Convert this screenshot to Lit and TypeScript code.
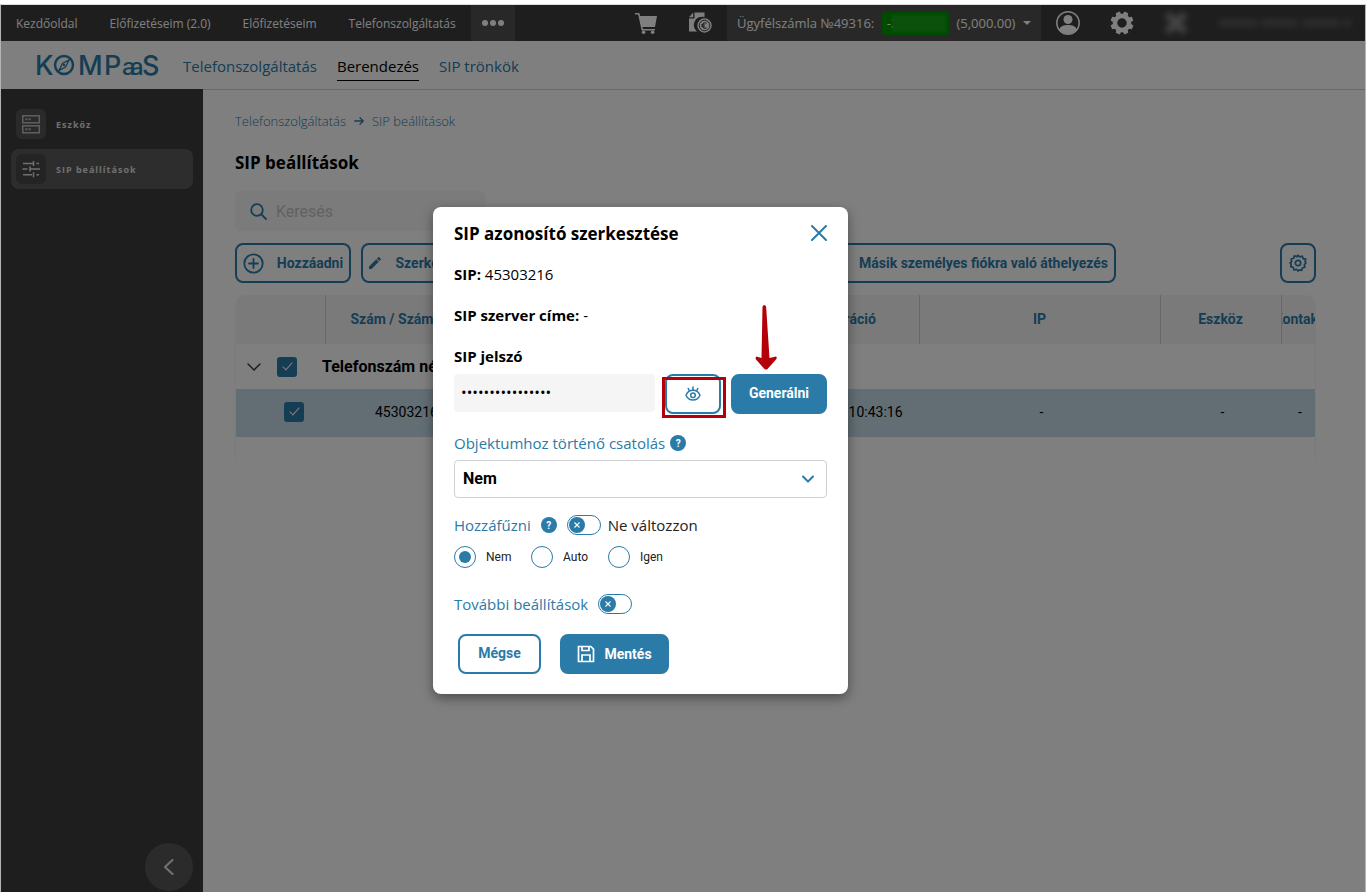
import { LitElement, html, css, svg } from "lit";
import { customElement, state } from "lit/decorators.js";
import { classMap } from "lit/directives/class-map.js";

const stroke = (size: number, body: unknown, width = 2, box = 24) => html`
  <svg width=${size} height=${size} viewBox="0 0 ${box} ${box}" fill="none" stroke="currentColor"
    stroke-width=${width} stroke-linecap="round" stroke-linejoin="round" aria-hidden="true">${body}</svg>`;

const solid = (size: number, body: unknown, box = 24) => html`
  <svg width=${size} height=${size} viewBox="0 0 ${box} ${box}" fill="currentColor" aria-hidden="true">${body}</svg>`;

const cart = solid(22, svg`<path d="M0 1h4.3l1 3H22l-2 11H7.5l.4 2H20v1.4H6.6L3.2 2.4H0z"/><circle cx="8.6" cy="20.2" r="1.8"/><circle cx="17.6" cy="20.2" r="1.8"/>`, 22);

const invoice = solid(24, svg`<path d="M6.500 1.500h10V6a8.300 8.300 0 0 0-7.500 14.500H1V7.500h5.500z"/><path d="M1 6.200 5.200 1.500v4.700z"/><circle cx="16.500" cy="14.500" r="7.200"/>
  <circle cx="16.500" cy="14.500" r="5.300" fill="none" stroke="#3c3c3c" stroke-width="1"/>
  <path d="M18.500 12.200a2.700 2.700 0 1 0 0 4.600M13.300 13.800h3.400M13.300 15.300h3.400" fill="none" stroke="#3c3c3c" stroke-width="1.100"/>`);

const user = html`<svg width="24" height="24" viewBox="0 0 24 24" fill="currentColor" aria-hidden="true">
  <circle cx="12" cy="12" r="11.200" fill="none" stroke="currentColor" stroke-width="1.500"/>
  <circle cx="12" cy="8.500" r="4.500"/><path d="M3 18.500c2-4 5.500-4.500 9-4.500s7 .5 9 4.500A11.200 11.200 0 0 1 3 18.500z"/></svg>`;

const gearTeeth = [0, 45, 90, 135, 180, 225, 270, 315];
const gear = html`<svg width="24" height="24" viewBox="0 0 24 24" aria-hidden="true">
  <circle cx="12" cy="12" r="7" fill="none" stroke="currentColor" stroke-width="4.500"/>
  ${gearTeeth.map((a) => svg`<path d="M9.300 3.500 10 .5h4l.7 3z" fill="currentColor" transform="rotate(${a + 22.5} 12 12)"/>`)}</svg>`;

const gearOutline = stroke(18, svg`<path d="M9 1.200 10.700 3l2.600-.9.700 2.500 2.700.6-.6 2.600L17 9l-1.700 1.700.6 2.500-2.500.7-.7 2.600-2.500-.6L9 17l-1.500-1.700-2.500.7-.7-2.600-2.600-.7.600-2.500L1 9l1.700-1.500-.6-2.500 2.600-.7.700-2.500 2.500.8z"/><circle cx="9" cy="9" r="2.700"/>`, 1.7, 18);

const server = html`<svg width="20" height="20" viewBox="0 0 20 20" fill="none" stroke="currentColor" stroke-width="1.500" aria-hidden="true">
  <rect x="1.800" y="1.800" width="16.500" height="7"/><rect x="1.800" y="11.800" width="16.500" height="7"/>
  <path d="M4.500 5.200h2M7.700 5.200h2M4.500 15.200h2M7.700 15.200h2" stroke-width="2"/></svg>`;

const sliders = html`<svg width="20" height="20" viewBox="0 0 20 20" fill="none" stroke="currentColor" stroke-width="1.500" aria-hidden="true">
  <path d="M2 4.500h11M15.500 4.500H18M12.500 2v5M1.500 10h5M9 10h10M9 7.500v5M2 15.800h9M15.500 15.800H18M12.500 13.300v5"/></svg>`;

const pencil = solid(16, svg`<path d="M2 11.500V14h2.500l7.300-7.300-2.500-2.500zM13.700 4.800a.7.7 0 0 0 0-1L12.200 2.300a.7.7 0 0 0-1 0L10 3.500 12.500 6z"/>`, 16);

const eye = html`<svg width="18" height="18" viewBox="0 0 18 18" fill="none" stroke="currentColor" stroke-width="1.500" aria-hidden="true">
  <path d="M2 10.200C3.400 7 6 5.300 9 5.300s5.600 1.700 7 4.900c-1.400 3-4 4.800-7 4.800s-5.600-1.800-7-4.800z"/>
  <circle cx="9" cy="10.200" r="2.300"/><path d="M9 5V1.500M5.300 5.800 4 3M12.700 5.800 14 3"/></svg>`;

const floppy = html`<svg width="18" height="18" viewBox="0 0 18 18" fill="none" stroke="currentColor" stroke-width="1.700" aria-hidden="true">
  <path d="M1.500 1.500h12.300l2.700 2.700v12.300h-15z"/><path d="M5 1.500v4h7v-4M5 16.500V10h8v6.500"/></svg>`;

@customElement("app-toggle")
export class AppToggle extends LitElement {
  static properties = { label: { type: String } };
  declare label: string;
  static styles = css`
    :host { display: block; height: 20px; }
    .toggle { position: relative; display: block; box-sizing: border-box; width: 34px; height: 20px;
      border: 1px solid #2a7ba8; border-radius: 10px; background: #fff; padding: 1px; }
    .input { position: absolute; inset: 0; margin: 0; opacity: 0; cursor: pointer; }
    .knob { display: block; color: #2a7ba8; transition: margin-left 0.2s; }
    .input:checked + .knob { margin-left: 14px; }
  `;
  render() {
    return html`<span class="toggle">
      <input class="input" type="checkbox" role="switch" aria-label=${this.label} />
      <svg class="knob" width="16" height="16" viewBox="0 0 16 16" aria-hidden="true">
        <circle cx="8" cy="8" r="8" fill="currentColor" />
        <path d="M5.500 5.500l5 5m0-5l-5 5" stroke="#fff" stroke-width="1.100" />
      </svg>
    </span>`;
  }
}

@customElement("app-root")
export class AppRoot extends LitElement {
  @state() private attach = "Nem";

  static styles = css`
    :host { display: block; font-family: "Open Sans", "Noto Sans", sans-serif; color: #000; }
    * { box-sizing: border-box; }
    svg { display: block; flex: none; }
    button, input, select { font-family: inherit; margin: 0; }
    button { cursor: pointer; }
    a { color: inherit; text-decoration: none; }

    .frame { min-height: 100vh; padding-top: 4px; background: #fff; display: flex; flex-direction: column; }
    .page { position: relative; flex: 1; display: flex; flex-direction: column; overflow: hidden;
      border: 1px solid #b4b4b4; border-top-color: #dcdcdc; border-bottom: 0; }

    .topbar { display: flex; height: 36px; background: #3c3c3c; color: #fff; font-size: 12px; white-space: nowrap; }
    .topnav { display: flex; gap: 2px; }
    .toplink { display: flex; align-items: center; padding: 0 15px; }
    .more { display: flex; align-items: center; justify-content: center; width: 44px; border: 0; padding: 0;
      background: #515151; color: #fff; }
    .tools { margin-left: auto; display: flex; align-items: center; }
    .tool { display: flex; align-items: center; justify-content: center; width: 54px; height: 36px; padding: 0;
      border: 0; background: none; color: #fff; }
    .account { display: flex; align-items: center; justify-content: space-between; height: 36px; width: 314px; padding: 0 10px;
      border: 0; background: #515151; color: #fff; font-size: 13px; }
    .badge { display: flex; align-items: center; height: 23px; width: 67px; padding-left: 5px; border-radius: 3px;
      background: #009600; color: #fff; }
    .redacted { flex: 1; height: 17px; margin: 0 3px 0 -6px; background: #17a017; filter: blur(1px); }
    .blurred { filter: blur(3px); opacity: 0.4; }
    .person { width: 162px; display: flex; justify-content: flex-end; padding-right: 12px; }
    .person .blurred { opacity: 0.3; }

    .subbar { display: flex; align-items: center; height: 49px; padding-left: 35px; border-bottom: 1px solid #dccfd4;
      background: #fff; color: #2a7ba8; }
    .logo { color: #2a7ba8; overflow: visible; }
    .subnav { display: flex; gap: 20px; margin-left: 21px; font-size: 15px; white-space: nowrap; }
    .sublink { line-height: 24px; padding-bottom: 2px; border-bottom: 1px solid transparent; margin-top: 4px; }
    .sublink.active { color: #000; border-color: #000; }

    .body { flex: 1; display: flex; }
    .side { display: flex; flex-direction: column; gap: 5px; width: 202px; flex: none; margin-top: -1px;
      padding: 15px 10px 1px; background: #3c3c3c; color: #fff; }
    .sideitem { display: flex; align-items: center; gap: 10px; height: 40px; padding: 0 5px; border-radius: 8px;
      font-size: 9px; font-weight: 700; letter-spacing: 1px; color: #e0e0e0; }
    .sideitem.active { background: #5a5a5a; }
    .sideicon { display: flex; align-items: center; justify-content: center; width: 30px; height: 30px;
      border-radius: 6px; background: #555; color: #c0c0c0; }
    .sideitem.active .sideicon { background: #484848; color: #e0e0e0; }
    .collapse { display: flex; align-items: center; justify-content: center; width: 48px; height: 48px; margin-top: auto;
      align-self: flex-end; padding: 0; border: 0; border-radius: 50%; background: #575757; color: #e0e0e0; }

    .main { flex: 1; min-width: 0; padding: 19px 49px 0 32px; }
    .crumbs { display: flex; align-items: center; gap: 8px; height: 24px; font-size: 13px; font-weight: 300; color: #2a7ba8; }
    .title { margin: 18px 0 16px; font-size: 17px; line-height: 24px; font-weight: 700; }
    .search { display: flex; align-items: center; gap: 9px; width: 250px; height: 40px; padding: 0 15px; border-radius: 5px;
      background: #f6f6f6; color: #2a7ba8; }
    .searchbox { flex: 1; min-width: 0; border: 0; padding: 0; background: none; outline: 0; font: 16px Roboto, sans-serif; }
    .searchbox::placeholder { color: #c4c4c4; opacity: 1; }

    .actions { display: flex; gap: 10px; margin: 12px 0; }
    .btn { display: flex; align-items: center; justify-content: center; height: 40px; padding: 0 6px; border: 2px solid #2a7ba8;
      border-radius: 8px; background: #fff; color: #2a7ba8; font: 700 14px Roboto, sans-serif; white-space: nowrap; }
    .add { width: 116px; gap: 13px; padding: 0; }
    .edit { width: 118px; gap: 12px; }
    .move { width: 627px; justify-content: flex-end; }
    .settings { width: 36px; padding: 0; margin-left: auto; }

    .tablewrap { height: 167px; border: 1px solid #f5f5f5; border-width: 0 1px; border-radius: 10px 10px 0 0; overflow: hidden; }
    .table { width: 100%; table-layout: fixed; border-collapse: collapse; font: 14px Roboto, sans-serif; }
    .table th, .table td { padding: 0; overflow: hidden; white-space: nowrap; }
    .table thead th { height: 49px; padding-bottom: 2px; background: #f5f5f5; color: #2a7ba8; font-weight: 700; border-left: 1px solid #cfcfcf; }
    .table thead th:first-child { border-left: 0; }
    .head { display: flex; justify-content: center; }
    .table thead th.start { text-align: left; padding-left: 25px; }
    .group { display: flex; align-items: center; height: 45px; padding-left: 11px; font-size: 16px; font-weight: 700; }
    .table .groupcell { text-align: left; }
    .arrow { color: #333; margin-right: 16px; }
    .group .check { margin-right: 25px; }
    .row { background: #c5dce8; }
    .table .row td { height: 48px; text-align: center; padding: 0 0 2px 4px; }
    .table .row td.start { text-align: left; padding-left: 50px; }
    .table .row td.pick { text-align: left; padding-left: 48px; }
    .check { appearance: none; display: block; width: 20px; height: 20px; border-radius: 3px; background: #2a7ba8; position: relative; }
    .check:checked::before { content: ""; position: absolute; left: 8px; top: 3px; width: 4px; height: 9px;
      border: solid #fff; border-width: 0 1px 1px 0; transform: rotate(42deg); }
    .c-pick { width: 89px; } .c-num { width: 160px; } .c-name { width: 269px; } .c-reg { width: 165px; }
    .c-dev { width: 121px; } .c-contact { width: 34px; }

    .overlay { position: absolute; inset: 0; display: flex; align-items: center; justify-content: center;
      padding: 4px 85px 0 0; background: rgba(0, 0, 0, 0.5); }
    .modal { width: 415px; padding: 14px 21px 20px; border-radius: 8px; background: #fff; box-shadow: 0 4px 12px rgba(0, 0, 0, 0.4); }
    .modalhead { display: flex; align-items: center; justify-content: space-between; height: 24px; }
    .modaltitle { margin: 0; font-size: 17px; font-weight: 700; }
    .close { padding: 0; border: 0; background: none; color: #2a7ba8; }
    .line { margin: 17px 0 0; font-size: 15px; line-height: 24px; }
    .line b, .line label { font-weight: 700; }
    .password { position: relative; display: flex; gap: 10px; margin-top: 6px; }
    .pwd { flex: 1; min-width: 0; height: 38px; padding: 0 7px 2px; border: 0; border-radius: 4px; background: #f5f5f5; outline: 0; font-size: 15px; }
    .reveal { width: 56px; }
    .filled { background: #2a7ba8; color: #fff; }
    .generate { width: 96px; padding-bottom: 2px; }
    .mark { position: absolute; left: 207px; top: -70px; pointer-events: none; }
    .field { display: flex; align-items: center; height: 24px; font-size: 15px; color: #2a7ba8; white-space: nowrap; }
    .attach { margin-top: 17px; gap: 5px; }
    .help { display: flex; align-items: center; justify-content: center; width: 16px; height: 16px; padding: 0; border: 0;
      border-radius: 50%; background: #2a7ba8; color: #fff; font: 700 10px Roboto, sans-serif; }
    .selectwrap { position: relative; margin-top: 5px; color: #2a7ba8; }
    .select { appearance: none; width: 100%; height: 38px; padding: 0 8px 2px; border: 1px solid #d0d0d0; border-radius: 4px;
      background: #fff; color: #000; font: 700 16px Roboto, sans-serif; display: block; }
    .caret { position: absolute; right: 12px; top: 12px; pointer-events: none; }
    .pin { margin-top: 15px; gap: 10px; }
    .state { color: #222; margin-left: -3px; }
    .radios { display: flex; height: 22px; margin: 9px 0 0; padding: 0; border: 0; font: 12px Roboto, sans-serif; color: #222; }
    .radio { display: flex; align-items: center; gap: 10px; width: 77px; }
    .dot { appearance: none; width: 22px; height: 22px; border: 1px solid #2a7ba8; border-radius: 50%; padding: 4px; background: #fff; }
    .dot:checked { background: #2a7ba8 content-box; }
    .extra { margin-top: 24px; gap: 10px; }
    .foot { display: flex; gap: 19px; margin: 18px 0 0 4px; }
    .cancel { width: 83px; padding-bottom: 2px; }
    .save { width: 109px; gap: 9px; }
  `;

  private logo() {
    return html`<svg class="logo" width="126" height="40" viewBox="0 0 126 40" role="img" aria-label="KOMPaaS">
      <g font-family="Inter, sans-serif" font-size="27" font-weight="500" fill="currentColor">
        <text x="-1" y="30">K</text><text x="42" y="30">M</text><text x="68" y="30">P</text>
        <text x="86" y="30" font-size="24">a</text><text x="94" y="30" font-size="24">a</text><text x="106" y="30">S</text>
      </g>
      <circle cx="28" cy="20" r="9" fill="none" stroke="currentColor" stroke-width="2.500" />
      <path d="M33 15l-3.500 7-6.500 3.500 3.500-7z" fill="none" stroke="currentColor" stroke-width="1.400" />
      <circle cx="28" cy="20" r="1.200" fill="currentColor" />
    </svg>`;
  }

  render() {
    const top = ["Kezdőoldal", "Előfizetéseim (2.0)", "Előfizetéseim", "Telefonszolgáltatás"];
    const sub = ["Telefonszolgáltatás", "Berendezés", "SIP trönkök"];
    return html`<div class="frame"><div class="page">
      <header class="topbar">
        <nav class="topnav">${top.map((t) => html`<a class="toplink" href="#">${t}</a>`)}</nav>
        <button class="more" aria-label="Továbbiak">${solid(24, svg`<circle cx="4" cy="12" r="3"/><circle cx="12" cy="12" r="3"/><circle cx="20" cy="12" r="3"/>`)}</button>
        <div class="tools">
          <button class="tool" aria-label="Kosár">${cart}</button>
          <button class="tool" aria-label="Számlák">${invoice}</button>
          <button class="account"><span>Ügyfélszámla №49316:</span>
            <span class="badge">-2<span class="redacted"></span></span>
            <span>(5,000.00)</span>
            <svg width="8" height="4" viewBox="0 0 8 4"><path d="M0 0h8L4 4z" fill="currentColor" /></svg></button>
          <button class="tool" aria-label="Profil">${user}</button>
          <button class="tool" aria-label="Beállítások">${gear}</button>
          <button class="tool" aria-label="Eszközök"><svg class="blurred" width="26" height="26" viewBox="0 0 26 26"><path d="M4 4l18 18M22 4L4 22" stroke="#fff" stroke-width="7" /></svg></button>
          <div class="person"><svg class="blurred" width="136" height="16" viewBox="0 0 136 16"><path d="M2 8h132" stroke="#aaa" stroke-width="7" stroke-dasharray="38 4 36 5" /></svg></div>
        </div>
      </header>
      <div class="subbar">${this.logo()}
        <nav class="subnav">${sub.map((t, i) => html`<a href="#" class=${classMap({ sublink: true, active: i === 1 })}>${t}</a>`)}</nav>
      </div>
      <div class="body">
        <nav class="side">
          <a class="sideitem" href="#"><span class="sideicon">${server}</span>Eszköz</a>
          <a class="sideitem active" href="#"><span class="sideicon">${sliders}</span>SIP beállítások</a>
          <button class="collapse" aria-label="Összecsukás">${stroke(20, svg`<path d="M13.500 3L6 10l7.500 7"/>`, 2.2, 20)}</button>
        </nav>
        <main class="main">
          <nav class="crumbs"><a href="#">Telefonszolgáltatás</a>${stroke(10, svg`<path d="M.8 5h8.400M6 1.800 9.200 5 6 8.200"/>`, 1.3, 10)}<a href="#">SIP beállítások</a></nav>
          <h1 class="title">SIP beállítások</h1>
          <label class="search">${stroke(17, svg`<circle cx="7" cy="7" r="5.800"/><path d="M11.300 11.300 16 16"/>`, 1.8, 17)}
            <input class="searchbox" type="search" placeholder="Keresés" aria-label="Keresés" /></label>
          <div class="actions">
            <button class="btn add">${stroke(21, svg`<circle cx="10.500" cy="10.500" r="9.200"/><path d="M10.500 6v9M6 10.500h9"/>`, 1.8, 21)}Hozzáadni</button>
            <button class="btn edit">${pencil}Szerkesztés</button>
            <button class="btn move">Másik személyes fiókra való áthelyezés</button>
            <button class="btn settings" aria-label="Táblázat beállításai">${gearOutline}</button>
          </div>
          <div class="tablewrap"><table class="table">
            <colgroup><col class="c-pick" /><col class="c-num" /><col class="c-name" /><col class="c-reg" /><col /><col class="c-dev" /><col class="c-contact" /></colgroup>
            <thead><tr><th></th><th class="start">Szám / Számok</th><th></th><th><span class="head">Regisztráció</span></th>
              <th><span class="head">IP</span></th><th><span class="head">Eszköz</span></th><th><span class="head">Kontakt</span></th></tr></thead>
            <tbody>
              <tr><th class="groupcell" colspan="7"><div class="group"><span class="arrow">${stroke(14, svg`<path d="M1 4l6 6 6-6"/>`, 1.4, 14)}</span>
                <input class="check" type="checkbox" checked aria-label="Csoport kijelölése" />Telefonszám nélkül</div></th></tr>
              <tr class="row"><td class="pick"><input class="check" type="checkbox" checked aria-label="Sor kijelölése" /></td>
                <td class="start">45303216</td><td></td><td>2023-11-16 10:43:16</td><td>-</td><td>-</td><td>-</td></tr>
            </tbody>
          </table></div>
        </main>
      </div>
      <div class="overlay">
        <section class="modal" role="dialog" aria-modal="true" aria-labelledby="dialog-title">
          <div class="modalhead"><h2 class="modaltitle" id="dialog-title">SIP azonosító szerkesztése</h2>
            <button class="close" aria-label="Bezárás">${stroke(16, svg`<path d="M1 1l14 14M15 1L1 15"/>`, 2, 16)}</button></div>
          <p class="line"><b>SIP:</b> 45303216</p>
          <p class="line"><b>SIP szerver címe:</b> -</p>
          <p class="line"><label for="pwd">SIP jelszó</label></p>
          <div class="password">
            <input class="pwd" id="pwd" type="password" value="abcdefgh12345678" />
            <button class="btn reveal" aria-label="Jelszó megjelenítése">${eye}</button>
            <button class="btn filled generate">Generálni</button>
            <svg class="mark" width="130" height="116" viewBox="0 0 130 116" aria-hidden="true">
              <rect x="2.500" y="74.500" width="61" height="38" fill="none" stroke="#b30009" stroke-width="3" />
              <path d="M101.500 2.500q1.800-3 3.600 0L108.500 54l6.500-1.500q1.500 1 0 3L106.500 65q-1.500 1-3 0L95 55.500q-1-2 .5-3l5 1.500z" fill="#b30009" />
            </svg>
          </div>
          <div class="field attach"><label for="attach">Objektumhoz történő csatolás</label><button class="help" aria-label="Súgó">?</button></div>
          <div class="selectwrap">
            <select class="select" id="attach" .value=${this.attach} @change=${(e: Event) => (this.attach = (e.target as HTMLSelectElement).value)}>
              <option>Nem</option><option>Igen</option></select>
            <svg class="caret" width="14" height="14" viewBox="0 0 14 14" fill="none"><path d="M2 4.500l5 5 5-5" stroke="currentColor" stroke-width="2" stroke-linecap="round" stroke-linejoin="round" /></svg>
          </div>
          <div class="field pin"><span>Hozzáfűzni</span><button class="help" aria-label="Súgó">?</button>
            <app-toggle label="Ne változzon"></app-toggle><span class="state">Ne változzon</span></div>
          <fieldset class="radios" aria-label="Hozzáfűzni">
            ${["Nem", "Auto", "Igen"].map((t, i) => html`<label class="radio"><input class="dot" type="radio" name="pin" ?checked=${i === 0} />${t}</label>`)}
          </fieldset>
          <div class="field extra"><span>További beállítások</span><app-toggle label="További beállítások"></app-toggle></div>
          <div class="foot"><button class="btn cancel">Mégse</button><button class="btn filled save">${floppy}Mentés</button></div>
        </section>
      </div>
    </div></div>`;
  }
}
